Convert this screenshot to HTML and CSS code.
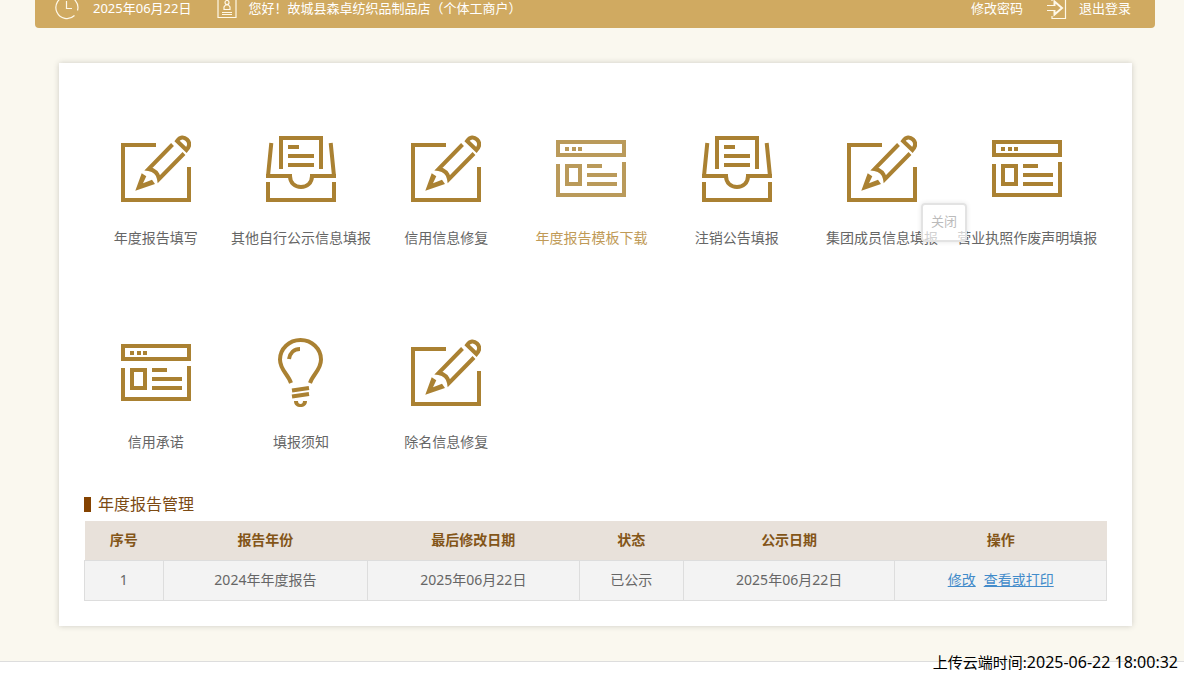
FILE: index.html
```html
<!DOCTYPE html>
<html lang="zh-CN">
<head>
<meta charset="utf-8">
<title>年度报告管理</title>
<link rel="stylesheet" href="styles.css">
</head>
<body>
<svg class="sprite" aria-hidden="true">
  <symbol id="edit" viewBox="0 0 70 72">
    <path d="M35 11H2V66H68V33M51.500 10.500L27.500 35C34 36 37 39 38 45L63 19.500M56 7C59 2.500 63 2.500 66 5.500C69 8.500 69 12 65.500 16Z"/>
    <path class="solid" d="M20.700 39.300L25.300 42.300L22 49.300L31 45.700L34 50L14.300 56.700Z"/>
  </symbol>
  <symbol id="tray" viewBox="0 0 70 72">
    <path d="M5.300 9L2 42H24C24 49 29 53 35 53S46 49 46 42H68L64.700 9M0 42H3M67 42H70M15 35V4H55V35M22 13H33M22 22H48M22 31H48M2 48V66H68V48"/>
  </symbol>
  <symbol id="window" viewBox="0 0 70 72">
    <path d="M2 8H68V21H2ZM9 15H13M16 15H20M22 15H26M2 30V61H68V28M11 32H24V50H11ZM31 32H46M31 41H61M31 50H61"/>
  </symbol>
  <symbol id="bulb" viewBox="0 0 70 72">
    <path d="M25 45C22 36 14 32 14 21.500A20.500 19.500 0 0 1 55 21.500C55 32 47 36 44 45M34 11C28 11 24 15 23 21M26 52.500L43 50M26 58.500L43 56"/>
    <path class="solid" d="M28 63h4c0 2 1 3 2.500 3s2.500-1 2.500-3h4c0 4-3 6-6.500 6s-6.500-2-6.500-6Z"/>
  </symbol>
</svg>

<div class="page">
  <header class="topbar">
    <svg class="bar-icon clock" viewBox="0 0 24 24"><path d="M19.500 19.500A11 11 0 1 1 22.500 14.500M11.500 5V12.500H17"/></svg>
    <span class="date">2025年06月22日</span>
    <svg class="bar-icon badge" viewBox="0 0 20 24"><path d="M3 3.500H1V21.500H19V3.500H16M5 16.500H15M5 18.500H15M7 13.500V11L8.500 9H11.500L13 11V13.500ZM10 4.500A2 2 0 1 1 10 8.500A2 2 0 1 1 10 4.500"/></svg>
    <span>您好！故城县森卓纺织品制品店（个体工商户）</span>
    <a class="password" href="#password">修改密码</a>
    <a class="logout" href="#logout"><svg class="bar-icon exit" viewBox="0 0 20 24"><path d="M5 5V3H18.500V22.500H5V20M0 9.500H8M0 14.500H8"/><path class="bold" d="M7.500 14V18.500L15 12L7.500 5.500V10"/></svg>退出登录</a>
  </header>

  <main class="card">
    <nav class="menu">
      <a class="item" href="#m1"><svg><use href="#edit"/></svg><span>年度报告填写</span></a>
      <a class="item" href="#m2"><svg><use href="#tray"/></svg><span>其他自行公示信息填报</span></a>
      <a class="item" href="#m3"><svg><use href="#edit"/></svg><span>信用信息修复</span></a>
      <a class="item active" href="#m4"><svg><use href="#window"/></svg><span>年度报告模板下载</span></a>
      <a class="item" href="#m5"><svg><use href="#tray"/></svg><span>注销公告填报</span></a>
      <a class="item" href="#m6"><svg><use href="#edit"/></svg><span>集团成员信息填报</span></a>
      <a class="item" href="#m7"><svg><use href="#window"/></svg><span>营业执照作废声明填报</span></a>
      <a class="item" href="#m8"><svg><use href="#window"/></svg><span>信用承诺</span></a>
      <a class="item" href="#m9"><svg><use href="#bulb"/></svg><span>填报须知</span></a>
      <a class="item" href="#m10"><svg><use href="#edit"/></svg><span>除名信息修复</span></a>
    </nav>
    <button class="close" type="button">关闭</button>

    <h2 class="title">年度报告管理</h2>
    <table class="reports">
      <colgroup><col class="c-no"><col class="c-year"><col class="c-date"><col class="c-state"><col class="c-date"><col class="c-action"></colgroup>
      <thead>
        <tr><th>序号</th><th>报告年份</th><th>最后修改日期</th><th>状态</th><th>公示日期</th><th>操作</th></tr>
      </thead>
      <tbody>
        <tr><td>1</td><td>2024年年度报告</td><td>2025年06月22日</td><td>已公示</td><td>2025年06月22日</td><td><div class="actions"><a href="#edit-report">修改</a><a href="#print">查看或打印</a></div></td></tr>
      </tbody>
    </table>
  </main>
</div>
<div class="stamp"><span>上传云端时间:</span><time>2025-06-22 18:00:32</time></div>
</body>
</html>
```
FILE: styles.css
```css
* { box-sizing: border-box; }
body {
  margin: 0;
  background: #fff;
  color: #666;
  font: 14px/20px "Noto Sans", "Noto Sans CJK SC", sans-serif;
}
a { color: inherit; text-decoration: none; }
.sprite { position: absolute; width: 0; height: 0; }
.page {
  padding: 0 29px 35px 35px;
  background: #faf8ef;
  border-bottom: 1px solid #ddd;
}
.topbar {
  display: flex;
  align-items: center;
  height: 28px;
  padding: 0 24px 12px 20px;
  border-radius: 0 0 4px 4px;
  background: #d0aa61;
  color: #fff;
  font-size: 13px;
  line-height: 16px;
  white-space: nowrap;
}
.bar-icon {
  flex: none;
  width: 20px;
  height: 24px;
  fill: none;
  stroke: #fff8e8;
  stroke-width: 1.2;
}
.bar-icon .bold { stroke-width: 2; }
.clock { width: 24px; margin-right: 14px; }
.badge { margin: 0 12px 0 25px; }
.password { margin-left: auto; }
.logout { display: flex; align-items: center; margin-left: 24px; }
.exit { margin-right: 12px; }
.card {
  position: relative;
  margin: 35px 23px 0 24px;
  padding: 71px 25px 25px;
  background: #fff;
  box-shadow: 0 0 6px rgba(0, 0, 0, 0.18);
}
.menu {
  display: grid;
  grid-template-columns: repeat(7, minmax(0, 1fr));
  row-gap: 90px;
  margin: 0 7px 0 -1px;
}
.item {
  display: flex;
  flex-direction: column;
  align-items: center;
  gap: 22px;
  white-space: nowrap;
}
.item svg {
  width: 70px;
  height: 72px;
  overflow: visible;
  fill: none;
  stroke: #aa8132;
  stroke-width: 4;
}
.solid { fill: #aa8132; stroke: none; }
.item.active { color: #c09a56; }
.item.active svg { opacity: 0.8; }
.close {
  position: absolute;
  top: 140px;
  right: 165px;
  width: 46px;
  height: 39px;
  padding: 0 0 3px;
  border: 2px solid #e3e3e3;
  border-radius: 4px;
  background: rgba(255, 255, 255, 0.7);
  box-shadow: 0 0 5px rgba(0, 0, 0, 0.1);
  color: #bbb;
  font: inherit;
  font-size: 13px;
}
.title {
  display: flex;
  align-items: center;
  gap: 7px;
  margin: 40px 0 5px;
  color: #7c4a13;
  font-size: 16px;
  font-weight: 400;
  line-height: 24px;
}
.title::before {
  content: "";
  width: 7px;
  height: 15px;
  background: #844200;
}
.reports {
  width: 100%;
  border-collapse: collapse;
  table-layout: fixed;
  text-align: center;
}
.c-no { width: 7.7%; }
.c-year { width: 20%; }
.c-date { width: 20.7%; }
.c-state { width: 10.2%; }
th, td { height: 40px; padding: 0; }
th { height: 39px; background: #e8e1da; color: #835518; font-weight: 700; }
td { border: 1px solid #ddd; background: #f3f3f3; }
.actions { display: flex; justify-content: center; gap: 8px; color: #428bca; }
.actions a { text-decoration: underline; }
.stamp {
  position: absolute;
  right: 6px;
  bottom: 2px;
  display: flex;
  align-items: baseline;
  color: #000;
  line-height: 24px;
  white-space: nowrap;
}
.stamp span { font-size: 15px; }
.stamp time { font-size: 16px; }
```
